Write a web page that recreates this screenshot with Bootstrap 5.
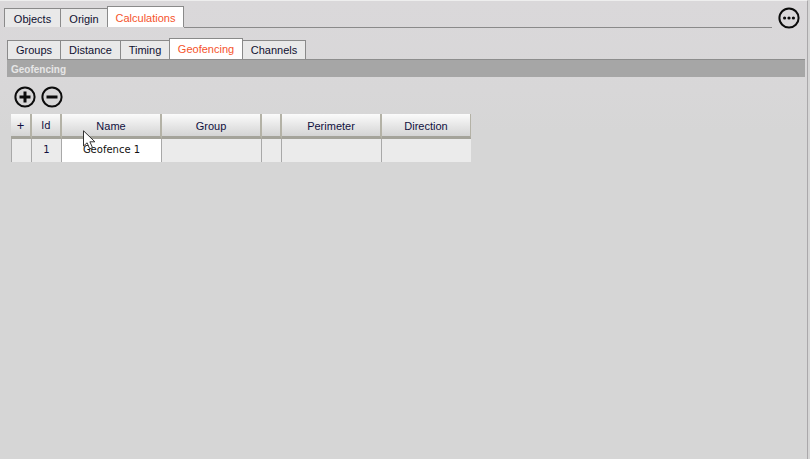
<!DOCTYPE html>
<html lang="en">
<head>
<meta charset="utf-8">
<title>Geofencing</title>
<link href="https://cdn.jsdelivr.net/npm/bootstrap@5.3.0/dist/css/bootstrap.min.css" rel="stylesheet">
<style>
html,body{height:100%;}
body{margin:0;width:810px;height:459px;overflow:hidden;background:#d6d6d6;font-family:"Liberation Sans",Tahoma,sans-serif;font-size:11px;color:#101030;}
.shell{position:relative;width:808px;height:459px;background:linear-gradient(#dad8da 0,#d8d7d8 90px,#d6d6d6 130px);border-right:1px solid #aaa8aa;border-top:1px solid #eeeeee;}
.outer-bar{height:26px;padding-left:4px;padding-right:7px;}
.tabset{flex-wrap:nowrap;border-bottom:0;align-items:flex-end;}
.tabset .nav-link{display:block;height:19px;line-height:19px;padding:0;margin:0;border:1px solid #8a8a8a;border-left-width:0;border-bottom:0;border-radius:0;background:#e9e9e9;color:#101030;text-align:center;font-size:11px;}
.tabset .nav-item:first-child .nav-link{border-left-width:1px;}
.tabset .nav-link.active{height:21px;line-height:21px;background:#fff;color:#f5532c;border-left-width:1px;margin-left:-1px;}
.tabset.tabs-top .nav-link{line-height:21px;}
.tabset.tabs-top .nav-link.active{line-height:22px;}
.rule-fill{flex:1;align-self:flex-end;border-bottom:1px solid #8a8a8a;margin-bottom:-1px;}
.more-btn{width:22px;height:22px;margin-left:6px;margin-top:6px;}
.more-btn svg,.tool-ic svg{display:block;}
.inner-wrap{margin-top:11px;padding-left:7px;padding-right:2px;}
.band{height:18px;line-height:20px;background:#a6a6a6;border-top:1px solid #8d8d8d;color:#e6e6e6;font-weight:700;font-size:10px;padding-left:4px;}
.tools{height:37px;padding-left:14px;padding-top:2px;gap:5px;}
.tool-ic{width:22px;height:22px;}
.grid-wrap{padding-left:11px;}
.geo-grid{table-layout:fixed;width:460px;margin:0;border-collapse:separate;border-spacing:0;}
.geo-grid th{height:25px;padding:2px 0 0;font-weight:400;font-size:11px;text-align:center;color:#101040;background:linear-gradient(#fbfbfb,#d4d4d4);border-right:2px solid #b4b2a6;border-left:0;border-top:0;border-bottom:3px solid #a4a39a;line-height:20px;}
.geo-grid td{height:23px;padding:0;font-size:11px;text-align:center;color:#101040;background:#ebebeb;border:0;border-right:1px solid #a8a8a8;line-height:22px;}
.geo-grid td:first-child{border-left:1px solid #a8a8a8;}
.geo-grid th:last-child{border-right:1px solid #b4b2a6;}
.geo-grid td:last-child{border-right:0;}
.geo-grid td.name-cell{background:#fff;color:#111;font-family:"DejaVu Sans",sans-serif;font-size:10px;}
.geo-grid .dv-cell{font-family:"DejaVu Sans",sans-serif;font-size:10px;}
.geo-grid .plus-cell{font-size:13px;}
.pointer{position:absolute;left:83px;top:129px;width:13px;height:20px;}
</style>
</head>
<body>
<div class="shell">
  <div class="outer-bar d-flex align-items-start">
    <ul class="nav tabset tabs-top mt-1 pt-0 flex-grow-0" style="height:22px">
      <li class="nav-item"><a class="nav-link" style="width:57px" href="#">Objects</a></li>
      <li class="nav-item"><a class="nav-link" style="width:47px" href="#">Origin</a></li>
      <li class="nav-item"><a class="nav-link active" style="width:77px" href="#">Calculations</a></li>
    </ul>
    <div class="rule-fill"></div>
    <div class="more-btn">
      <svg width="22" height="22" viewBox="0 0 22 22"><circle cx="11" cy="11" r="9.6" fill="none" stroke="#0c0c0c" stroke-width="2"/><circle cx="6.6" cy="11" r="1.6" fill="#0c0c0c"/><circle cx="11" cy="11" r="1.6" fill="#0c0c0c"/><circle cx="15.4" cy="11" r="1.6" fill="#0c0c0c"/></svg>
    </div>
  </div>
  <div class="inner-wrap">
    <ul class="nav tabset" style="height:21px">
      <li class="nav-item"><a class="nav-link" style="width:54px" href="#">Groups</a></li>
      <li class="nav-item"><a class="nav-link" style="width:60px" href="#">Distance</a></li>
      <li class="nav-item"><a class="nav-link" style="width:49px" href="#">Timing</a></li>
      <li class="nav-item"><a class="nav-link active" style="width:74px" href="#">Geofencing</a></li>
      <li class="nav-item"><a class="nav-link" style="width:63px" href="#">Channels</a></li>
    </ul>
    <div class="band">Geofencing</div>
  </div>
  <div class="tools d-flex align-items-center" >
    <div class="tool-ic ms-0"><svg width="22" height="22" viewBox="0 0 22 22"><circle cx="11" cy="11" r="9.6" fill="none" stroke="#0c0c0c" stroke-width="2"/><path d="M11 5.5v11M5.5 11h11" stroke="#0c0c0c" stroke-width="3"/></svg></div>
    <div class="tool-ic"><svg width="22" height="22" viewBox="0 0 22 22"><circle cx="11" cy="11" r="9.6" fill="none" stroke="#0c0c0c" stroke-width="2"/><path d="M5.5 11h11" stroke="#0c0c0c" stroke-width="3"/></svg></div>
  </div>
  <div class="grid-wrap">
    <table class="table geo-grid">
      <colgroup><col style="width:21px"><col style="width:30px"><col style="width:100px"><col style="width:100px"><col style="width:20px"><col style="width:100px"><col style="width:89px"></colgroup>
      <thead><tr><th class="plus-cell">+</th><th class="dv-cell">Id</th><th>Name</th><th>Group</th><th></th><th>Perimeter</th><th>Direction</th></tr></thead>
      <tbody><tr><td></td><td class="dv-cell">1</td><td class="name-cell">Geofence 1</td><td></td><td></td><td></td><td></td></tr></tbody>
    </table>
  </div>
  <svg class="pointer" viewBox="0 0 13 20"><path d="M0.5 0.8V16l3.6-3.2 2.6 6 2.8-1.2-2.6-5.8h5z" fill="#fff" stroke="#333" stroke-width="1"/></svg>
</div>
<script src="https://cdn.jsdelivr.net/npm/bootstrap@5.3.0/dist/js/bootstrap.bundle.min.js"></script>
</body>
</html>
